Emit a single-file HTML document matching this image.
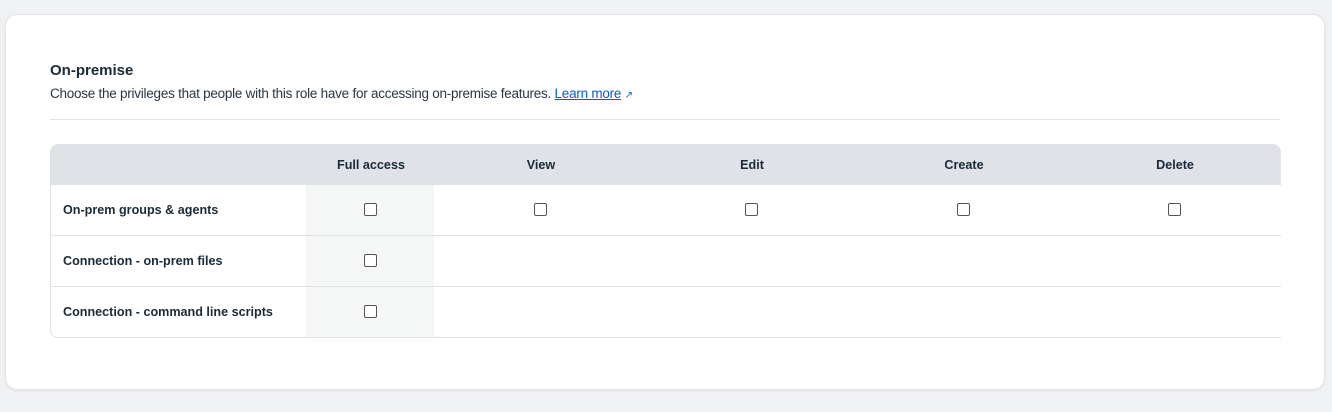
<!DOCTYPE html>
<html><head><style>
body{margin:0;width:1332px;height:412px;background:#f0f1f3;font-family:"Liberation Sans",sans-serif;color:#1a2b38;position:relative;overflow:hidden}
.card{position:absolute;left:5px;top:14px;width:1318px;height:374px;background:#fff;border:1px solid #e1e3e6;border-radius:12px;box-shadow:0 1px 2px rgba(0,0,0,.06)}
.h{position:absolute;left:50px;top:62px;font-size:15px;font-weight:bold;color:#1a2b38}
.d{position:absolute;left:50px;top:86px;font-size:13.5px;color:#2a3640;letter-spacing:-.25px}
.d a{color:#0b5cc4;text-decoration:underline}
.hr{position:absolute;left:50px;top:119px;width:1230px;height:1px;background:#dfe1e4}
.tbl{position:absolute;left:50px;top:144px;width:1230px;height:193px;border-left:1px solid #dfe1e4;border-bottom:1px solid #dfe1e4;border-radius:8px 8px 0 8px;overflow:hidden}
.hd{position:absolute;left:0;top:0;width:1230px;height:41px;background:#dfe2e6;border-radius:8px 8px 0 0}
.shade{position:absolute;left:255px;top:41px;width:128px;height:152px;background:#f5f6f6}
.row{position:absolute;left:0;width:1230px;height:51px;border-top:1px solid #dfe1e4;box-sizing:border-box}
.lbl{position:absolute;left:12px;font-size:12.6px;font-weight:bold;color:#1a2b38}
.th{position:absolute;top:14px;font-size:12.6px;font-weight:bold;color:#1a2b38;transform:translateX(-50%)}
.cb{position:absolute;width:11px;height:11px;border:1px solid #555;border-radius:2px;background:#fff}
</style></head><body>
<div class="card"></div>
<div class="h">On-premise</div>
<div class="d">Choose the privileges that people with this role have for accessing on-premise features. <a>Learn more</a> <span style="color:#0b5cc4;font-size:10px">&#x2197;</span></div>
<div class="hr"></div>
<div class="tbl">
<div class="hd"></div>
<div class="th" style="left:320px">Full access</div>
<div class="th" style="left:490px">View</div>
<div class="th" style="left:701px">Edit</div>
<div class="th" style="left:913px">Create</div>
<div class="th" style="left:1124px">Delete</div>
<div class="shade"></div>
<div class="row" style="top:41px;border-top:none"></div>
<div class="row" style="top:91px"></div>
<div class="row" style="top:142px"></div>
<div class="lbl" style="top:59px">On-prem groups &amp; agents</div>
<div class="lbl" style="top:110px">Connection - on-prem files</div>
<div class="lbl" style="top:161px">Connection - command line scripts</div>
<div class="cb" style="left:313px;top:59px"></div>
<div class="cb" style="left:483px;top:59px"></div>
<div class="cb" style="left:694px;top:59px"></div>
<div class="cb" style="left:906px;top:59px"></div>
<div class="cb" style="left:1117px;top:59px"></div>
<div class="cb" style="left:313px;top:110px"></div>
<div class="cb" style="left:313px;top:161px"></div>
</div>
</body></html>
